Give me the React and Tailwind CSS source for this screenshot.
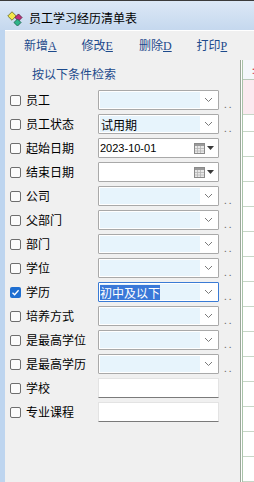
import React from 'react';

const rows = [
  { label: '员工', type: 'combo' },
  { label: '员工状态', type: 'combo', value: '试用期' },
  { label: '起始日期', type: 'date', value: '2023-10-01' },
  { label: '结束日期', type: 'date' },
  { label: '公司', type: 'combo' },
  { label: '父部门', type: 'combo' },
  { label: '部门', type: 'combo' },
  { label: '学位', type: 'combo' },
  { label: '学历', type: 'combo', value: '初中及以下', checked: true },
  { label: '培养方式', type: 'combo' },
  { label: '是最高学位', type: 'combo' },
  { label: '是最高学历', type: 'combo' },
  { label: '学校', type: 'text' },
  { label: '专业课程', type: 'text' },
];

function AppIcon() {
  return (
    <svg width="18" height="16" viewBox="0 0 18 16">
      <rect x="2" y="3" width="6" height="6" transform="rotate(45 5 6)" fill="#f4e84a" stroke="#6b6b2a" strokeWidth="0.8" />
      <rect x="9" y="5" width="5" height="5" transform="rotate(45 11.5 7.5)" fill="#c0307a" stroke="#5a1a3a" strokeWidth="0.8" />
      <rect x="8" y="10" width="5" height="5" transform="rotate(45 10.5 12.5)" fill="#2fb58a" stroke="#1b5e48" strokeWidth="0.8" />
    </svg>
  );
}

function Checkbox({ checked }) {
  if (checked) {
    return (
      <div className="w-[11px] h-[11px] rounded-[2px] bg-[#1f6fd1] flex items-center justify-center">
        <svg width="9" height="9" viewBox="0 0 9 9">
          <path d="M1.5 4.8 L3.6 6.8 L7.6 2.2" fill="none" stroke="#fff" strokeWidth="1.3" />
        </svg>
      </div>
    );
  }
  return <div className="w-[11px] h-[11px] rounded-[2px] border border-[#6e6e6e] bg-[#fbfbfb]" />;
}

function Chevron() {
  return (
    <svg width="9" height="6" viewBox="0 0 9 6" className="shrink-0">
      <path d="M1 1 L4.5 4.5 L8 1" fill="none" stroke="#7a7a7a" strokeWidth="1" />
    </svg>
  );
}

function CalendarIcon() {
  return (
    <div className="flex items-center gap-[2px] shrink-0">
      <svg width="11" height="11" viewBox="0 0 11 11">
        <rect x="0.5" y="0.5" width="10" height="10" fill="#e8e8e8" stroke="#8a8a8a" />
        <rect x="1" y="1" width="9" height="2" fill="#9a9a9a" />
        <path d="M3.5 3 V10 M6.5 3 V10 M1 5.5 H10 M1 8 H10" stroke="#b5b5b5" strokeWidth="0.8" />
      </svg>
      <svg width="7" height="4" viewBox="0 0 7 4">
        <path d="M0 0 H7 L3.5 4 Z" fill="#3a3a3a" />
      </svg>
    </div>
  );
}

function Field({ row }) {
  if (row.type === 'text') {
    return (
      <div className="w-[121px] h-[20px] bg-white border border-[#e3e3e3] border-b-[#7a7a7a]" />
    );
  }
  if (row.type === 'date') {
    return (
      <div className="w-[121px] h-[20px] bg-white border border-[#a9a9a9] rounded-[1px] flex items-center pl-[1px] pr-[4px]">
        <span className="flex-1 text-[11px] text-black font-['Liberation_Sans',sans-serif]">{row.value}</span>
        <CalendarIcon />
      </div>
    );
  }
  return (
    <div
      className={`w-[121px] h-[20px] bg-white border rounded-[1px] flex items-center p-[1px] ${
        row.checked ? 'border-[#3a7bd5]' : 'border-[#a9a9a9]'
      }`}
    >
      <div className="w-[100px] h-full bg-[#e7f4fc] flex items-center">
        {row.value && (
          <span
            className={`text-[12px] leading-[15px] ${
              row.checked ? 'bg-[#3a78d8] text-white' : 'text-black pl-[1px]'
            }`}
          >
            {row.value}
          </span>
        )}
      </div>
      <div className="flex-1 flex justify-center">
        <Chevron />
      </div>
    </div>
  );
}

function ToolButton({ text, hot }) {
  return (
    <div className="w-[60px] text-[12px] text-[#1d4a8c]">
      {text}
      <span className="underline font-['Liberation_Serif',serif]">{hot}</span>
    </div>
  );
}

export default function App() {
  return (
    <div className="w-[254px] h-[482px] bg-[#f0f0f0] overflow-hidden flex flex-col font-['Noto_Sans_CJK_SC',sans-serif]">
      {/* Title bar */}
      <div className="h-[30px] shrink-0 border-t border-[#3b3b3b] bg-gradient-to-b from-[#dce8f6] to-[#c5d8ee] flex items-center pl-[7px] gap-[4px] pt-[4px]">
        <AppIcon />
        <span className="text-[12px] text-black">员工学习经历清单表</span>
      </div>

      <div className="flex-1 flex min-h-0">
        <div className="w-[5px] bg-[#bed5ef] shrink-0" />
        <div className="flex-1 flex flex-col min-w-0">
          {/* Toolbar */}
          <div className="h-[30px] shrink-0 flex items-center pl-[19px] border-t border-white">
            <ToolButton text="新增" hot="A" />
            <ToolButton text="修改" hot="E" />
            <ToolButton text="删除" hot="D" />
            <ToolButton text="打印" hot="P" />
          </div>

          <div className="flex-1 flex min-h-0">
            {/* Search form */}
            <div className="w-[235px] shrink-0 flex flex-col">
              <div className="h-[28px] flex items-center pl-[27px] text-[12px] text-[#1d4a8c]">按以下条件检索</div>
              {rows.map((row) => (
                <div key={row.label} className="h-[24px] flex items-center">
                  <div className="ml-[5px]">
                    <Checkbox checked={row.checked} />
                  </div>
                  <div className="w-[77px] pl-[5px] text-[12px] text-black">{row.label}</div>
                  <Field row={row} />
                  {row.type === 'combo' && (
                    <div className="ml-[5px] mt-[6px] text-[10px] text-[#6a6a6a] tracking-[2px]">..</div>
                  )}
                </div>
              ))}
            </div>

            {/* Right grid */}
            <div className="flex-1 flex border-l border-[#9aa79a]">
              <div className="w-[1px] bg-white" />
              <div className="flex-1 flex flex-col border-l border-[#a9c3a9] bg-white">
                <div className="h-[23px] bg-[#f4f7fb] border-b border-[#b9c9b9] flex items-center pl-[9px]">
                  <span className="text-[10px] text-[#d02020] leading-none">:</span>
                </div>
                <div className="h-[40px] bg-[#fbeaf0] border-b border-[#c7d6c7]" />
                <div className="h-[19px] border-b border-[#c7d6c7]" />
                {Array.from({ length: 14 }).map((_, i) => (
                  <div key={i} className="h-[25px] shrink-0 border-b border-[#c7d6c7]" />
                ))}
              </div>
            </div>
          </div>
        </div>
      </div>
    </div>
  );
}
